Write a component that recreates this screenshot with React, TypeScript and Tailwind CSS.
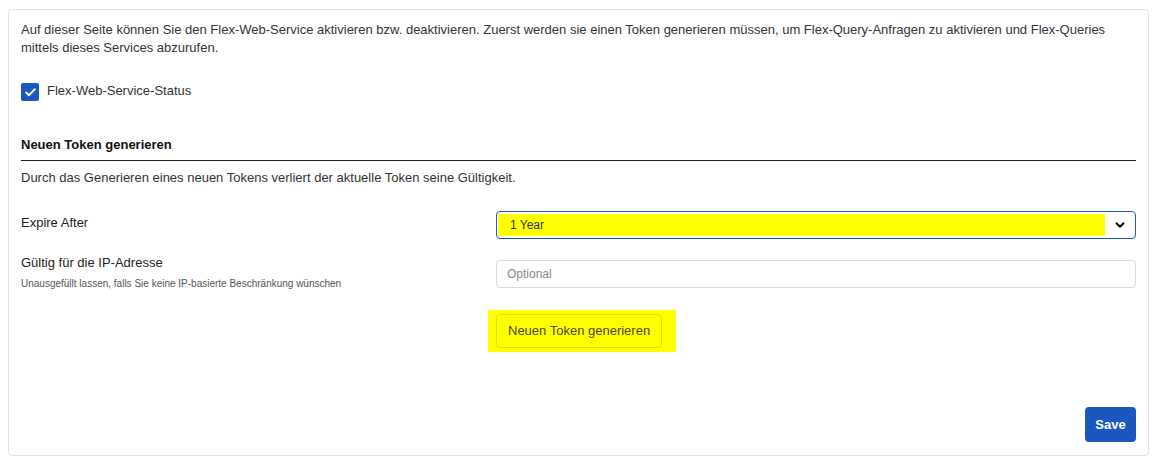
import { Check, ChevronDown } from "lucide-react";

export default function App() {
  return (
    <div
      className="w-[1159px] h-[466px] bg-white pt-[9px] pl-2 pr-[10px]"
      style={{ fontFamily: '"Liberation Sans", Arial, sans-serif' }}
    >
      <div className="h-[447px] border border-[#e3e3e3] rounded-[4px] px-3 pt-[11px] flex flex-col text-[13px] text-[#333]">
        <p className="leading-[18px]">
          Auf dieser Seite können Sie den Flex-Web-Service aktivieren bzw. deaktivieren. Zuerst werden sie einen Token
          generieren müssen, um Flex-Query-Anfragen zu aktivieren und Flex-Queries mittels dieses Services abzurufen.
        </p>

        <label className="flex items-center gap-2 mt-[26px]">
          <span className="w-[18px] h-[18px] bg-[#1a58c0] rounded-[2px] flex items-center justify-center">
            <Check className="w-[13px] h-[13px] text-white" strokeWidth={3.5} />
          </span>
          <span className="-mt-[2px]">Flex-Web-Service-Status</span>
        </label>

        <h3 className="mt-[35px] font-semibold text-[#111] leading-[18px] pb-[6px] border-b border-[#222]">
          Neuen Token generieren
        </h3>
        <p className="mt-[8px] leading-[18px]">
          Durch das Generieren eines neuen Tokens verliert der aktuelle Token seine Gültigkeit.
        </p>

        <div className="flex mt-[24px] items-start">
          <div className="w-[475px] pt-[3px] text-[#222] leading-[18px]">Expire After</div>
          <div className="flex-1 h-[28px] border border-[#1a58c0] rounded-[4px] flex items-center pl-[1px] pr-[8px]">
            <div className="flex-1 h-[22px] bg-[#ffff00] flex items-center pl-[12px] text-[12px] text-[#333]">1 Year</div>
            <ChevronDown className="ml-[8px] w-[14px] h-[14px] text-black" strokeWidth={3.5} />
          </div>
        </div>

        <div className="flex mt-[21px] items-start">
          <div className="w-[475px] text-[#222]">
            <div className="leading-[18px] -mt-[6px]">Gültig für die IP-Adresse</div>
            <div className="text-[10px] text-[#555] mt-[4px]">
              Unausgefüllt lassen, falls Sie keine IP-basierte Beschränkung wünschen
            </div>
          </div>
          <input
            className="flex-1 h-[28px] border border-[#dcdcdc] rounded-[4px] px-[10px] text-[12px] outline-none placeholder:text-[#888]"
            placeholder="Optional"
          />
        </div>

        <div className="mt-[19px] ml-[467px] w-[188px] h-[42px] bg-[#ffff00] flex items-center pl-[8px]">
          <button className="h-[34px] px-[11px] border border-[#e3e000] rounded-[4px] text-[13px] text-[#4a4a1a]">
            Neuen Token generieren
          </button>
        </div>

        <div className="mt-auto mb-[13px] flex justify-end">
          <button className="w-[51px] h-[35px] bg-[#1a58c0] rounded-[4px] text-white font-bold text-[13px]">Save</button>
        </div>
      </div>
    </div>
  );
}
